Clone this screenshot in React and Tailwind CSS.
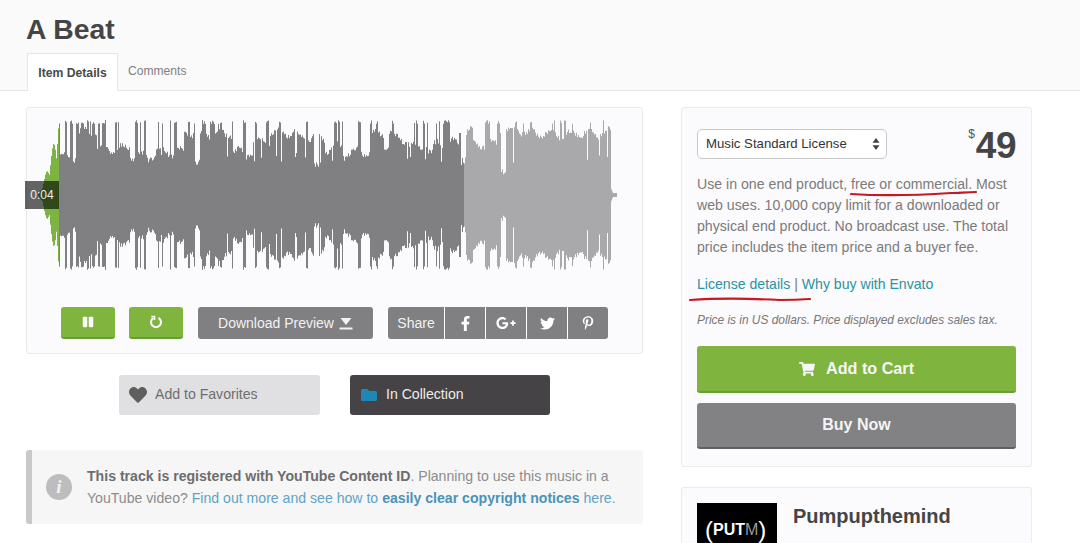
import { FaFacebookF, FaFolder, FaGooglePlusG, FaHeart, FaPause, FaPinterestP, FaShoppingCart, FaTwitter } from 'react-icons/fa'

// waveform columns, seeded so the picture stays the same on every load
const CENTER = 75
let seed = 11
const rnd = () => {
  seed = (seed * 16807) % 2147483647
  return seed / 2147483647
}

const dips = [[197, 30], [316, 28], [345, 36], [386, 40], [463, 30], [503, 20], [236, 42], [129, 40], [430, 40]]

const columns = []
let hump = 50
let humpLeft = 0
let spikeLeft = 0
for (let x = 59; x < 611; x++) {
  // body comes in irregular blocks, like the loud and quiet hits of the track
  if (humpLeft <= 0) {
    hump = 36 + rnd() * 30
    humpLeft = 10 + Math.floor(rnd() * 22)
  }
  humpLeft--
  let amp = hump + Math.sin(x / 3.1) * 4 + rnd() * 5
  if (spikeLeft > 0) {
    amp = 75 - rnd() * 4
    spikeLeft--
  } else {
    const r = rnd()
    if (r < 0.17) {
      amp = 75 - rnd() * 4
      spikeLeft = Math.floor(rnd() * 2.4)
    } else if (r < 0.22) {
      amp = 32 + rnd() * 10
    }
  }
  for (const [dx, da] of dips) {
    if (Math.abs(x - dx) < 3) amp = Math.min(amp, da + rnd() * 8)
  }
  columns.push([x, Math.min(amp, 75)])
}

const toPath = (cols) => cols.map(([x, a]) => `M${x} ${CENTER - a}h1v${a * 2}h-1z`).join('')

const greenCols = []
for (let x = 38; x < 59; x++) {
  const t = (x - 38) / 20
  const wobble = 0.55 + 0.45 * Math.abs(Math.cos((x - 38) / 2.3))
  greenCols.push([x, Math.max(1, (t * 0.65 + t * t * 0.35) * 75) * wobble])
}

function Waveform() {
  const played = columns.filter(([x]) => x < 464)
  const rest = columns.filter(([x]) => x >= 464)
  return (
    <div className="relative h-[151px] w-[617px]">
      <svg width="617" height="151" viewBox="26 0 617 151" className="block blur-[0.5px]">
        <path d={toPath(greenCols)} fill="#7cb342" />
        <path d={toPath(played)} fill="#807f81" />
        <path d={toPath(rest)} fill="#a9a8aa" />
        <path d="M611 68l2 5h4v4h-4l-2 5z" fill="#a9a8aa" />
      </svg>
      <div className="absolute left-[-1px] top-[61px] flex h-[28px] w-[34px] items-center justify-center bg-black/60 text-[12px] text-[#eeeeee]">0:04</div>
    </div>
  )
}

function GreenButton({ children }) {
  return (
    <button className="flex h-[32px] w-[54px] items-center justify-center rounded-[3px] border-b-2 border-[#6c9c38] bg-[#7fb53f] text-white">
      {children}
    </button>
  )
}

function ShareCell({ children }) {
  return <span className="flex h-full w-[41px] items-center justify-center border-l border-white text-white">{children}</span>
}

export default function App() {
  return (
    <div className="h-[543px] w-[1080px] overflow-hidden bg-white font-['Liberation_Sans',Arial,sans-serif] text-[#777777]">
      <header className="h-[91px] border-b border-[#e6e6e6] bg-[#fafafa] pl-[26px]">
        <h1 className="pt-[12px] text-[28.3px] font-bold leading-[34px] text-[#454545]">A Beat</h1>
        <div className="mt-[7px] flex items-start">
          <span className="ml-px flex h-[38px] w-[91px] items-center justify-center border-x border-t border-[#e6e6e6] bg-white pt-[1px] text-[12.2px] font-bold text-[#4a4a4a]">Item Details</span>
          <span className="ml-[10px] pt-[9px] text-[12.1px] text-[#808080]">Comments</span>
        </div>
      </header>

      <main className="flex items-start pl-[26px] pt-[16px]">
        <section className="w-[617px]">
          <div className="h-[247px] rounded-[3px] border border-[#e9e8ea] bg-[#fbfafc]">
            <div className="-ml-px pt-[12px]">
              <Waveform />
            </div>
            <div className="mt-[36px] flex h-[32px] items-center pl-[34px]">
              <GreenButton><FaPause size={12} /></GreenButton>
              <div className="ml-[14px]">
                <GreenButton>
                  <svg width="14" height="14" viewBox="0 0 14 14" fill="none" stroke="currentColor" strokeWidth="2">
                    <path d="M9.5 2.8a5 5 0 1 1-5 0" />
                    <path d="M2.2 1.5h3.4v3.4" strokeWidth="1.4" />
                  </svg>
                </GreenButton>
              </div>
              <button className="ml-[15px] flex h-[32px] w-[175px] items-center justify-center gap-[5px] rounded-[3px] bg-[#807f81] text-[14px] text-[#f2f2f2]">
                Download Preview
                <svg width="14" height="13" viewBox="0 0 14 13" fill="currentColor">
                  <path d="M1.5 1h11L7 8z" />
                  <path d="M0.5 10.5h13v2h-13z" />
                </svg>
              </button>
              <div className="ml-[15px] flex h-[32px] items-center overflow-hidden rounded-[3px] bg-[#807f81] text-[14px] text-[#f2f2f2]">
                <span className="w-[56px] text-center">Share</span>
                <ShareCell><FaFacebookF size={15} /></ShareCell>
                <ShareCell><FaGooglePlusG size={20} /></ShareCell>
                <ShareCell><FaTwitter size={15} /></ShareCell>
                <ShareCell><FaPinterestP size={14} /></ShareCell>
              </div>
            </div>
          </div>

          <div className="mt-[21px] flex pl-[93px]">
            <button className="flex h-[40px] w-[201px] items-center rounded-[3px] bg-[#e0dfe1] pl-[10px] text-[14.1px] text-[#6e6e6e]">
              <FaHeart size={18} className="mr-[8px] text-[#5f5f5f]" />
              Add to Favorites
            </button>
            <button className="ml-[30px] flex h-[40px] w-[200px] items-center rounded-[3px] bg-[#454345] pl-[11px] text-[14.1px] text-[#ececec]">
              <FaFolder size={16} className="mr-[9px] text-[#1e87b5]" />
              In Collection
            </button>
          </div>

          <div className="mt-[35px] flex h-[74px] items-center rounded-[3px] border-l-[6px] border-[#c9c8ca] bg-[#f6f6f7] pl-[14px] text-[14.1px] leading-[22px] text-[#8c8c8c]">
            <span className="mr-[15px] flex h-[26px] w-[26px] shrink-0 items-center justify-center rounded-full bg-[#bdbdbd] font-['Liberation_Serif',serif] text-[19px] font-bold italic text-[#f2f2f2]">i</span>
            <p className="whitespace-nowrap">
              <strong className="font-bold text-[#6d6d6d]">This track is registered with YouTube Content ID</strong>. Planning to use this music in a
              <br />
              YouTube video? <span className="text-[#5fa3c4]">Find out more and see how to </span>
              <strong className="font-bold text-[#4a93b8]">easily clear copyright notices</strong>
              <span className="text-[#5fa3c4]"> here.</span>
            </p>
          </div>
        </section>

        <aside className="ml-[38px] w-[351px]">
          <div className="relative h-[360px] rounded-[3px] border border-[#ebeaec] bg-[#fbfafc] px-[15px] pt-[21px]">
            <div className="flex items-start justify-between">
              <div className="flex h-[30px] w-[190px] items-center justify-between rounded-[5px] border border-[#c8c8c8] bg-white pl-[8px] pr-[6px] text-[13.2px] text-[#333333]">
                Music Standard License
                <svg width="8" height="12" viewBox="0 0 8 12" fill="#444444">
                  <path d="M4 0l3.5 4.8h-7zM4 12L.5 7.2h7z" />
                </svg>
              </div>
              <div className="mt-[-1px] flex items-start font-bold text-[#454545]">
                <span className="mt-[-1px] text-[12px] font-normal leading-[14px] text-[#555555]">$</span>
                <span className="ml-[1px] text-[37px] leading-[36px] tracking-[-0.5px]">49</span>
              </div>
            </div>
            <p className="mt-[10px] w-[322px] text-[14.15px] leading-[21px] text-[#7b7b7b]">
              Use in one end product, free or commercial. Most web uses. 10,000 copy limit for a downloaded or physical end product. No broadcast use. The total price includes the item price and a buyer fee.
            </p>
            <p className="mt-[16px] text-[14.1px] leading-[21px] text-[#2a93a3]">
              License details <span className="text-[#777777]">|</span> Why buy with Envato
            </p>
            <p className="mt-[17px] text-[11.9px] italic leading-[16px] text-[#777777]">Price is in US dollars. Price displayed excludes sales tax.</p>
            <button className="mt-[18px] flex h-[47px] w-[319px] items-center justify-center gap-[11px] rounded-[3px] border-b-2 border-[#6c9c38] bg-[#7fb53f] text-[16.2px] font-bold text-[#f6f6f6]">
              <FaShoppingCart size={16} />
              Add to Cart
            </button>
            <button className="mt-[10px] h-[46px] w-[319px] rounded-[3px] border-b-2 border-[#5f5e60] bg-[#828183] text-[16px] font-bold text-[#f4f4f4]">Buy Now</button>

            {/* red pen marks on the screenshot */}
            <svg width="351" height="200" viewBox="0 0 351 200" fill="none" stroke="#c41a25" strokeWidth="2.2" strokeLinecap="round" className="absolute left-[-1px] top-[-1px]">
              <path d="M170 87c30 2 70 1 100-1 8 0 15-1 25-1" />
              <path d="M9 193c30-2 70-1 90 0 5 0 15 0 30-1" />
            </svg>
          </div>

          <div className="mt-[20px] flex h-[80px] rounded-[3px] border border-[#ebeaec] bg-[#fbfafc] px-[15px] pt-[15px]">
            <div className="relative h-[70px] w-[80px] shrink-0 overflow-hidden bg-black">
              <div className="absolute left-[8px] top-[14px] flex items-center text-white">
                <span className="text-[24px] leading-[26px]">(</span>
                <span className="text-[16px] font-bold">PUT<span className="font-normal text-[#9a9a9a]">M</span></span>
                <span className="text-[24px] leading-[26px]">)</span>
              </div>
              <svg width="80" height="40" viewBox="0 0 80 40" className="absolute left-0 top-[30px]" fill="#ffffff">
                <path d="M8 9c3 5 9 7 18 8-8 3-16 0-18-8z" />
              </svg>
            </div>
            <h2 className="ml-[16px] text-[20px] font-bold leading-[26px] text-[#454545]">Pumpupthemind</h2>
          </div>
        </aside>
      </main>
    </div>
  )
}
